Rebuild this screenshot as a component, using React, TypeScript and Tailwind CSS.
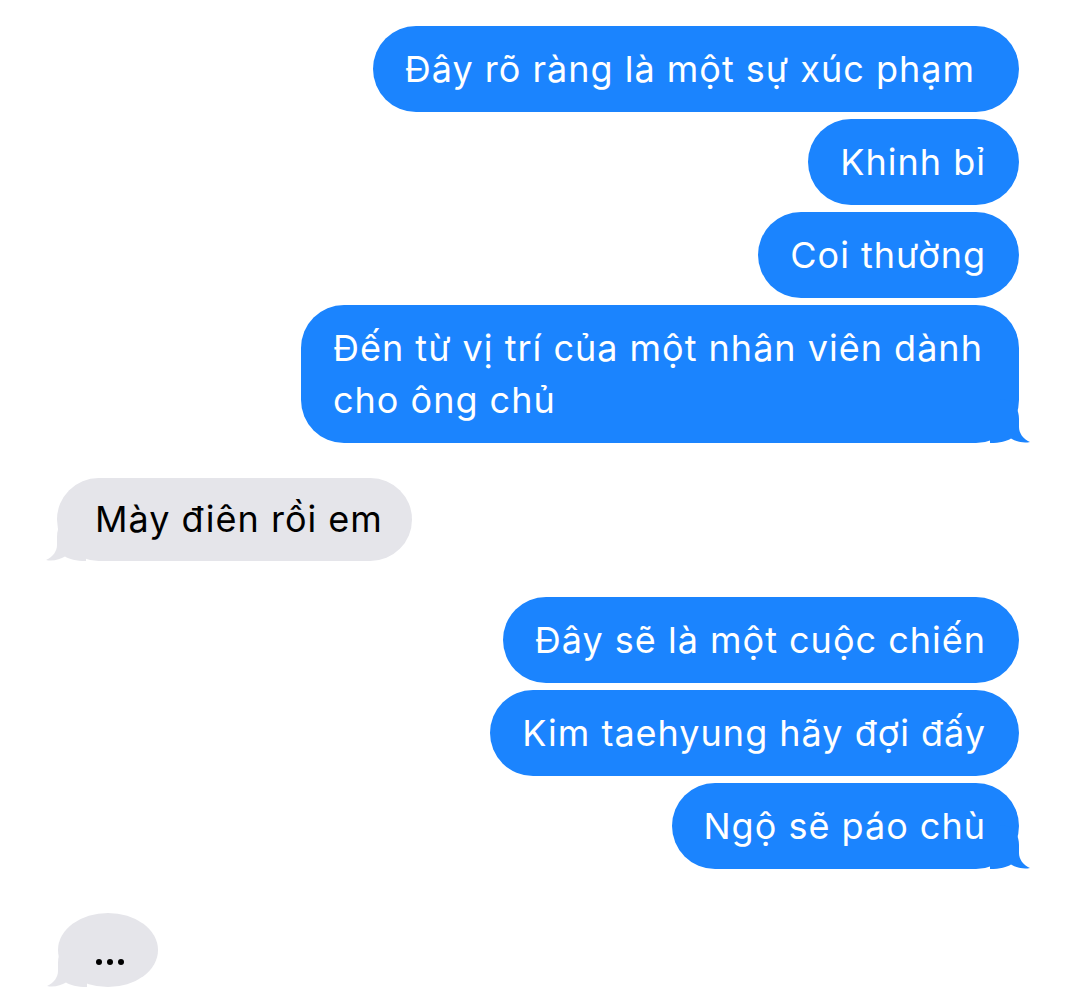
import React from "react";

const BLUE = "#1b84fe";

function TailRight() {
  return (
    <svg className="absolute right-[-11px] bottom-0" width="40" height="44" viewBox="0 0 40 44">
      <path
        d="M0 0 H10 C22 0 29 8 29 20 V28 C29 34 33 40 40 43 C33 44.5 26 42.5 21 39.5 C17 42 10 44 0 44 Z"
        fill={BLUE}
      />
    </svg>
  );
}

function TailLeft() {
  return (
    <svg className="absolute left-[-11px] bottom-0 -scale-x-100" width="40" height="44" viewBox="0 0 40 44">
      <path
        d="M0 0 H10 C22 0 29 8 29 20 V28 C29 34 33 40 40 43 C33 44.5 26 42.5 21 39.5 C17 42 10 44 0 44 Z"
        fill="#e5e5ea"
      />
    </svg>
  );
}

function Blue({ children, tail, wide }: { children: React.ReactNode; tail?: boolean; wide?: boolean }) {
  return (
    <div
      className={
        "relative max-w-[718px] rounded-[43px] bg-[#1b84fe] py-[17px] pl-[32px] text-[36px] leading-[52px] tracking-[1px] text-white " +
        (wide ? "pr-[44px]" : "pr-[33px]")
      }
    >
      {tail && <TailRight />}
      <span className="relative">{children}</span>
    </div>
  );
}

export default function App() {
  return (
    <div
      className="flex h-[1006px] w-[1080px] flex-col bg-white pl-[57px] pr-[61px] pt-[26px]"
      style={{ fontFamily: 'Inter, "Liberation Sans", Arial, sans-serif' }}
    >
      <div className="flex flex-col items-end gap-[7px]">
        <Blue wide>Đây rõ ràng là một sự xúc phạm</Blue>
        <Blue>Khinh bỉ</Blue>
        <Blue>Coi thường</Blue>
        <Blue tail>Đến từ vị trí của một nhân viên dành cho ông chủ</Blue>
      </div>

      <div className="mt-[35px] flex">
        <div className="relative rounded-[43px] bg-[#e5e5ea] py-[16px] pl-[38px] pr-[29px] text-[36px] leading-[51px] tracking-[1px] text-black">
          <TailLeft />
          <span className="relative">Mày điên rồi em</span>
        </div>
      </div>

      <div className="mt-[36px] flex flex-col items-end gap-[7px]">
        <Blue>Đây sẽ là một cuộc chiến</Blue>
        <Blue>Kim taehyung hãy đợi đấy</Blue>
        <Blue tail>Ngộ sẽ páo chù</Blue>
      </div>

      <div className="mt-[44px] flex pl-px">
        <div className="relative flex h-[74px] w-[100px] items-end justify-center rounded-[50%] bg-[#e5e5ea] pb-[22px] pl-[3px]">
          <TailLeft />
          <div className="relative flex gap-[5px]">
            <span className="h-[6px] w-[6px] rounded-full bg-black" />
            <span className="h-[6px] w-[6px] rounded-full bg-black" />
            <span className="h-[6px] w-[6px] rounded-full bg-black" />
          </div>
        </div>
      </div>
    </div>
  );
}
